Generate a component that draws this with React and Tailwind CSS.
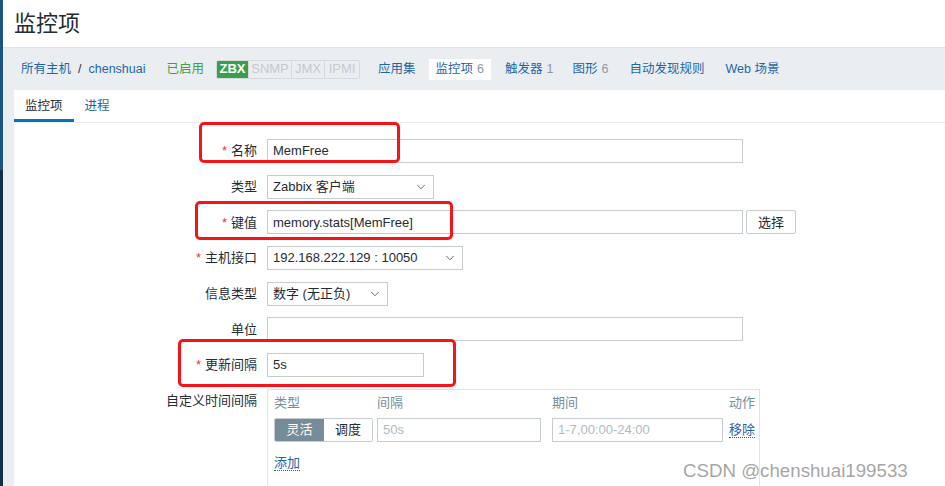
import { ChevronDown } from "lucide-react";

const font = "font-['Liberation_Sans','Noto_Sans_CJK_SC',sans-serif]";

const Label = ({ text, required }) => (
	<div className="flex h-[24px] items-center justify-end whitespace-nowrap text-[13px] text-[#1f2c33]">
		{required && <span className="mr-[4px] text-[#e33734]">*</span>}
		{text}
	</div>
);

const TextInput = ({ value, width, placeholder }) => (
	<div
		className={`flex h-[24px] items-center whitespace-nowrap border border-[#c5cdd3] bg-white px-[5px] text-[13px] ${
			placeholder ? "text-[#acbbc2]" : "text-[#1f2c33]"
		} ${width}`}
	>
		{value || placeholder}
	</div>
);

const Select = ({ value, width }) => (
	<div
		className={`flex h-[24px] items-center justify-between whitespace-nowrap border border-[#c5cdd3] bg-white pl-[5px] pr-[5px] text-[13px] text-[#1f2c33] ${width}`}
	>
		<span>{value}</span>
		<ChevronDown size={14} strokeWidth={1.5} className="text-[#4a5a63]" />
	</div>
);

const Badge = ({ name, active, width, last }) => (
	<span
		className={`flex h-full items-center justify-center ${width} ${
			active ? "bg-[#3a9f4a] font-bold text-white" : "text-[#c3cacf]"
		} ${last ? "" : "border-r border-[#d3d9dd]"}`}
	>
		{name}
	</span>
);

const NavLink = ({ name, count, current }) => (
	<span
		className={`flex h-[21px] items-center whitespace-nowrap px-[7px] ${
			current ? "bg-white" : ""
		} text-[#1f65a6]`}
	>
		{name}
		{count != null && <span className="ml-[4px] text-[#8a99a3]">{count}</span>}
	</span>
);

const Mark = ({ className }) => (
	<div
		className={`pointer-events-none absolute rounded-[5px] border-[3px] border-[#f5141a] ${className}`}
	/>
);

export default function App() {
	return (
		<div className={`flex h-[486px] w-[945px] overflow-hidden bg-[#ebeef1] ${font}`}>
			<div className="flex w-[3px] flex-col">
				<div className="h-[170px] bg-[#1c5380]" />
				<div className="flex-1 bg-[#123049]" />
			</div>

			<div className="relative flex flex-1 flex-col">
				<header className="flex h-[48px] shrink-0 items-center border-b border-[#dfe4e7] bg-white pl-[11px]">
					<h1 className="text-[22px] leading-none text-[#1f2c33]">监控项</h1>
				</header>

				<div className="flex flex-1 flex-col pl-[11px]">
					<nav className="flex h-[42px] shrink-0 items-center whitespace-nowrap text-[12.5px]">
						<span className="ml-[7px] text-[#1f65a6]">所有主机</span>
						<span className="mx-[7px] text-[#1f2c33]">/</span>
						<span className="text-[#1f65a6]">chenshuai</span>
						<span className="ml-[21px] text-[#429e47]">已启用</span>
						<span className="ml-[12px] flex h-[19px] items-center overflow-hidden rounded-[2px] border border-[#d3d9dd] text-[13px]">
							<Badge name="ZBX" width="w-[32px]" active />
							<Badge name="SNMP" width="w-[43px]" />
							<Badge name="JMX" width="w-[33px]" />
							<Badge name="IPMI" width="w-[34px]" last />
						</span>
						<span className="ml-[11px] flex items-center">
							<NavLink name="应用集" />
							<span className="ml-[6px]">
								<NavLink name="监控项" count={6} current />
							</span>
							<span className="ml-[7px]">
								<NavLink name="触发器" count={1} />
							</span>
							<span className="ml-[5px]">
								<NavLink name="图形" count={6} />
							</span>
							<span className="ml-[7px]">
								<NavLink name="自动发现规则" />
							</span>
							<span className="ml-[7px]">
								<NavLink name="Web 场景" />
							</span>
						</span>
					</nav>

					<section className="flex flex-1 flex-col bg-white">
						<div className="flex h-[33px] shrink-0 items-stretch border-b border-[#ebeef1] text-[12.5px]">
							<span className="flex items-center border-b-[3px] border-[#0275b8] px-[11px] pt-[3px] text-[#1f2c33]">
								监控项
							</span>
							<span className="flex items-center px-[11px] text-[#1f65a6]">进程</span>
						</div>

						<div className="grid grid-cols-[243px_1fr] gap-x-[10px] gap-y-[11.7px] pt-[16px]">
							<Label text="名称" required />
							<TextInput value="MemFree" width="w-[476px]" />

							<Label text="类型" />
							<Select value="Zabbix 客户端" width="w-[167px]" />

							<Label text="键值" required />
							<div className="flex gap-[3px]">
								<TextInput value="memory.stats[MemFree]" width="w-[476px]" />
								<button className="h-[24px] w-[50px] rounded-[2px] border border-[#c5cdd3] bg-white text-[13px] text-[#1f2c33]">
									选择
								</button>
							</div>

							<Label text="主机接口" required />
							<Select value="192.168.222.129 : 10050" width="w-[196px]" />

							<Label text="信息类型" />
							<Select value="数字 (无正负)" width="w-[121px]" />

							<Label text="单位" />
							<TextInput value="" width="w-[476px]" />

							<Label text="更新间隔" required />
							<TextInput value="5s" width="w-[157px]" />

							<Label text="自定义时间间隔" />
							<div className="w-[493px] whitespace-nowrap border border-[#dfe4e7] pb-[14px] pl-[6px] pt-[5px] text-[13px]">
								<div className="flex h-[16px] items-center text-[#768d99]">
									<span className="w-[99px]">类型</span>
									<span className="ml-[4px] w-[164px]">间隔</span>
									<span className="ml-[11px] w-[171px]">期间</span>
									<span className="ml-[6px]">动作</span>
								</div>
								<div className="mt-[7px] flex items-center">
									<div className="flex h-[24px] w-[99px] overflow-hidden rounded-[2px] border border-[#c5cdd3]">
										<span className="flex w-[49px] items-center justify-center bg-[#768d99] text-white">
											灵活
										</span>
										<span className="flex flex-1 items-center justify-center bg-white text-[#1f2c33]">
											调度
										</span>
									</div>
									<div className="ml-[4px]">
										<TextInput placeholder="50s" width="w-[164px]" />
									</div>
									<div className="ml-[11px]">
										<TextInput placeholder="1-7,00:00-24:00" width="w-[171px]" />
									</div>
									<span className="ml-[6px] border-b border-dotted border-[#1f65a6] leading-[15px] text-[#1f65a6]">
										移除
									</span>
								</div>
								<div className="mt-[11px]">
									<span className="border-b border-dotted border-[#1f65a6] leading-[15px] text-[#1f65a6]">
										添加
									</span>
								</div>
							</div>
						</div>
					</section>
				</div>

				<Mark className="left-[196px] top-[122px] h-[41px] w-[201px]" />
				<Mark className="left-[192px] top-[201px] h-[39px] w-[258px]" />
				<Mark className="left-[175px] top-[339px] h-[48px] w-[278px]" />

				<span className="pointer-events-none absolute left-[680px] top-[457px] whitespace-nowrap text-[18.7px] text-[#9a9a9a]/90">
					CSDN @chenshuai199533
				</span>
			</div>
		</div>
	);
}
